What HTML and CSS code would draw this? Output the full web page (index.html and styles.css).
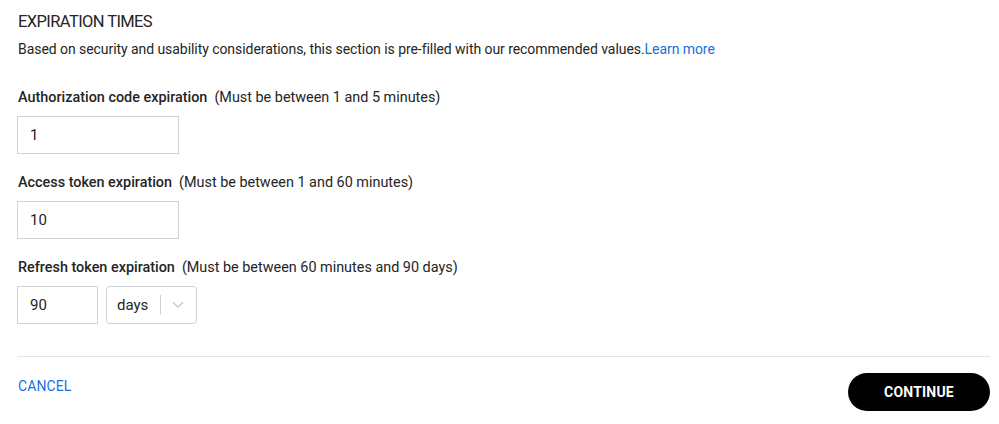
FILE: index.html
```html
<!DOCTYPE html>
<html>
<head>
<meta charset="utf-8">
<link rel="stylesheet" href="styles.css">
</head>
<body>
<div class="page">
  <h2 class="title">EXPIRATION TIMES</h2>
  <p class="desc">Based on security and usability considerations, this section is pre-filled with our recommended values.<a class="link" href="#">Learn more</a></p>

  <div class="field first">
    <div class="label"><span class="name">Authorization code expiration</span><span class="hint">(Must be between 1 and 5 minutes)</span></div>
    <div class="input wide">1</div>
  </div>

  <div class="field">
    <div class="label"><span class="name">Access token expiration</span><span class="hint">(Must be between 1 and 60 minutes)</span></div>
    <div class="input wide">10</div>
  </div>

  <div class="field">
    <div class="label"><span class="name">Refresh token expiration</span><span class="hint">(Must be between 60 minutes and 90 days)</span></div>
    <div class="row">
      <div class="input narrow">90</div>
      <div class="select">
        <span class="sel-val">days</span>
        <span class="sep"></span>
        <svg class="chev" width="12" height="8" viewBox="0 0 12 8"><path d="M1 1.5 L6 6 L11 1.5" fill="none" stroke="#c4c4c4" stroke-width="1.3"/></svg>
      </div>
    </div>
  </div>

  <div class="footer">
    <a class="cancel" href="#">CANCEL</a>
    <button class="continue">CONTINUE</button>
  </div>
</div>
</body>
</html>
```

FILE: styles.css
```css
html, body {
  margin: 0;
  padding: 0;
  background: #fff;
}
body {
  font-family: Roboto, "Liberation Sans", sans-serif;
  color: #252525;
}
.page {
  padding: 10px 9px 0 17px;
}
.title {
  margin: 0 0 0 1px;
  font-size: 16.5px;
  line-height: 24px;
  font-weight: 400;
  letter-spacing: -0.6px;
  color: #252525;
}
.desc {
  margin: 5px 0 0 1px;
  font-size: 14px;
  line-height: 20px;
  letter-spacing: -0.06px;
  color: #252525;
}
.link {
  color: #1a6fe0;
  text-decoration: none;
}
.field {
  margin-top: 19px;
}
.field.first {
  margin-top: 29px;
}
.label {
  margin-left: 1px;
  font-size: 14.4px;
  line-height: 20px;
  display: flex;
  gap: 7px;
}
.name {
  font-weight: 500;
}
.hint {
  font-weight: 400;
}
.input {
  margin-top: 8px;
  box-sizing: border-box;
  height: 38px;
  border: 1px solid #d0d3d6;
  padding: 0 12px;
  display: flex;
  align-items: center;
  font-size: 15px;
  color: #252525;
}
.wide {
  width: 162px;
}
.row {
  display: flex;
  gap: 8px;
  margin-top: 8px;
}
.row .input {
  margin-top: 0;
}
.narrow {
  width: 81px;
}
.select {
  box-sizing: border-box;
  height: 38px;
  width: 91px;
  border: 1px solid #d0d3d6;
  border-radius: 4px;
  display: flex;
  align-items: center;
  padding-left: 10px;
  font-size: 15px;
}
.sep {
  width: 1px;
  height: 20px;
  background: #d0d3d6;
  margin-left: 12px;
}
.chev {
  margin-left: 11px;
}
.footer {
  margin-top: 32px;
  border-top: 1px solid #e3e3e3;
  display: flex;
  justify-content: space-between;
  align-items: flex-start;
  padding-top: 16px;
}
.cancel {
  margin-top: 3px;
  margin-left: 1px;
  font-size: 14px;
  line-height: 20px;
  letter-spacing: 0.1px;
  color: #1a6fe0;
  text-decoration: none;
}
.continue {
  width: 142px;
  height: 38px;
  border: none;
  border-radius: 19px;
  background: #000;
  color: #fff;
  font-family: inherit;
  font-weight: 700;
  font-size: 14px;
  letter-spacing: 0.2px;
  cursor: pointer;
}
```
